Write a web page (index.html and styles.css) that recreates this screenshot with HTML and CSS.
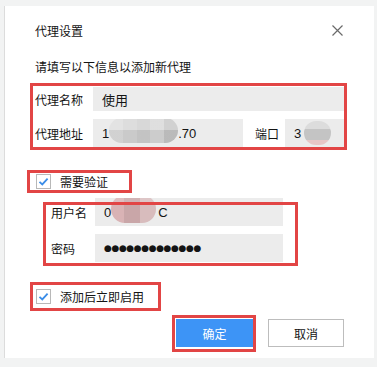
FILE: index.html
```html
<!DOCTYPE html>
<html lang="zh-CN">
<head>
<meta charset="utf-8">
<title>代理设置</title>
<link rel="stylesheet" href="styles.css">
</head>
<body>
<div class="dialog">
  <div class="header">
    <span class="title">代理设置</span>
    <svg class="close" width="11" height="11" viewBox="0 0 11 11"><path d="M0.5 0.5 L10.5 10.5 M10.5 0.5 L0.5 10.5" stroke="#6a6a6a" stroke-width="1.2" fill="none"/></svg>
  </div>
  <div class="subtitle">请填写以下信息以添加新代理</div>

  <div class="mark group-proxy">
    <div class="row row-name">
      <span class="label">代理名称</span>
      <div class="input grow">使用</div>
    </div>
    <div class="row row-addr">
      <span class="label">代理地址</span>
      <div class="input addr">1<span class="blob blob-addr"></span>.70</div>
      <span class="port-label">端口</span>
      <div class="input grow">3<span class="blob blob-port"></span></div>
    </div>
  </div>

  <div class="mark check check-auth">
    <span class="box"><svg width="13" height="13" viewBox="0 0 13 13"><path d="M2.5 6.8 L5.3 9.4 L10.6 3.6" stroke="#3b8de8" stroke-width="1.8" fill="none"/></svg></span>
    <span class="check-label">需要验证</span>
  </div>

  <div class="mark group-auth">
    <div class="row row-user">
      <span class="label short">用户名</span>
      <div class="input field">0<span class="blob blob-user"></span>C</div>
    </div>
    <div class="row row-pass">
      <span class="label short">密码</span>
      <div class="input field dots">●●●●●●●●●●●●●</div>
    </div>
  </div>

  <div class="mark check check-enable">
    <span class="box"><svg width="13" height="13" viewBox="0 0 13 13"><path d="M2.5 6.8 L5.3 9.4 L10.6 3.6" stroke="#3b8de8" stroke-width="1.8" fill="none"/></svg></span>
    <span class="check-label">添加后立即启用</span>
  </div>

  <div class="buttons">
    <div class="mark ok-wrap"><div class="btn btn-ok">确定</div></div>
    <div class="btn btn-cancel">取消</div>
  </div>
</div>
</body>
</html>
```
FILE: styles.css
```css
* { box-sizing: border-box; }
html, body { margin: 0; padding: 0; }
body {
  background: #f2f3f3;
  font-family: "Liberation Sans", "Noto Sans CJK SC", sans-serif;
  font-size: 12px;
  color: #141414;
  width: 377px;
  height: 367px;
  overflow: hidden;
  padding: 6px 3px 9px 4px;
}
.dialog {
  width: 370px;
  height: 352px;
  background: #fff;
  border-left: 1px solid #dcdcdc;
  padding: 0 30px 0 30px;
  display: flex;
  flex-direction: column;
}
.header {
  height: 48px;
  display: flex;
  align-items: center;
  justify-content: space-between;
}
.title { font-size: 12px; }
.close { margin-right: 1px; }
.subtitle {
  margin-top: 4px;
  line-height: 20px;
}
.mark { position: relative; }
.mark::after {
  content: "";
  position: absolute;
  inset: 0;
  border: 3px solid #e24545;
  pointer-events: none;
}
.row { display: flex; align-items: center; }
.label { width: 58px; flex: none; }
.label.short { width: 44px; }
.input {
  background: #ececec;
  padding-left: 9px;
  font-size: 13px;
  display: flex;
  align-items: center;
  white-space: nowrap;
  overflow: hidden;
}
.grow { flex: 1; }
.group-proxy {
  margin: 5px -3px 0 -5px;
  padding: 4px 0 3px 5px;
}
.row-name .input { height: 24px; }
.row-addr { margin-top: 8px; }
.row-addr .input { height: 28px; }
.input.addr { width: 150px; flex: none; }
.port-label { margin-left: 12px; margin-right: 6px; }
.blob {
  display: inline-block;
  flex: none;
  border-radius: 13px;
  background:
    linear-gradient(to bottom, rgba(255,255,255,0.25) 0 50%, rgba(0,0,0,0.04) 50% 100%),
    linear-gradient(to right, #dadada 0 20%, #d2d2d2 20% 40%, #cbcbcb 40% 60%, #d4d4d4 60% 80%, #c2c2c2 80% 100%);
}
.blob-addr { width: 69px; height: 25px; margin: -5px 0 0 0; }
.blob-port {
  width: 27px; height: 24px; margin: 0 0 0 3px; border-radius: 12px;
  background:
    linear-gradient(to bottom, #dcdcdc 0 35%, #c4c4c4 35% 80%, #e7c6c6 80% 100%);
}
.blob-user {
  width: 45px; height: 28px; margin: -6px 2px 0 0; border-radius: 14px;
  background:
    linear-gradient(to bottom, rgba(255,255,255,0.15) 0 30%, rgba(0,0,0,0) 30% 100%),
    linear-gradient(to right, #d9b3b5 0 30%, #c9a6a8 30% 65%, #d8bcbd 65% 100%);
}
.check {
  display: flex;
  align-items: center;
}
.box {
  width: 15px;
  height: 15px;
  border: 1px solid #b8b8b8;
  background: #fff;
  display: flex;
  align-items: center;
  justify-content: center;
  flex: none;
}
.check-label { margin-left: 9px; font-size: 12px; }
.check-auth {
  margin: 20px 0 0 -8px;
  width: 105px;
  height: 23px;
  padding-left: 9px;
}
.group-auth {
  margin: 9px 0 0 8px;
  width: 255px;
  padding: 0 15px 4px 8px;
}
.row-user { margin-top: -4px; }
.row-pass { margin-top: 8px; }
.input.field { width: 188px; height: 28px; flex: none; }
.dots {
  font-family: "DejaVu Sans", sans-serif;
  font-size: 9px;
  letter-spacing: -0.4px;
}
.check-enable {
  margin: 16px 0 0 -5px;
  width: 131px;
  height: 29px;
  padding-left: 6px;
}
.buttons {
  margin-top: 4px;
  display: flex;
  justify-content: flex-end;
}
.ok-wrap {
  width: 84px;
  height: 37px;
  padding: 4px 3px 5px 4px;
}
.btn {
  height: 28px;
  display: flex;
  align-items: center;
  justify-content: center;
  font-size: 12px;
}
.btn-ok {
  background: #3d94f6;
  color: #fff;
}
.btn-cancel {
  width: 76px;
  margin-left: 12px;
  margin-top: 4px;
  border: 1px solid #bdbdbd;
  background: #fff;
}
```
